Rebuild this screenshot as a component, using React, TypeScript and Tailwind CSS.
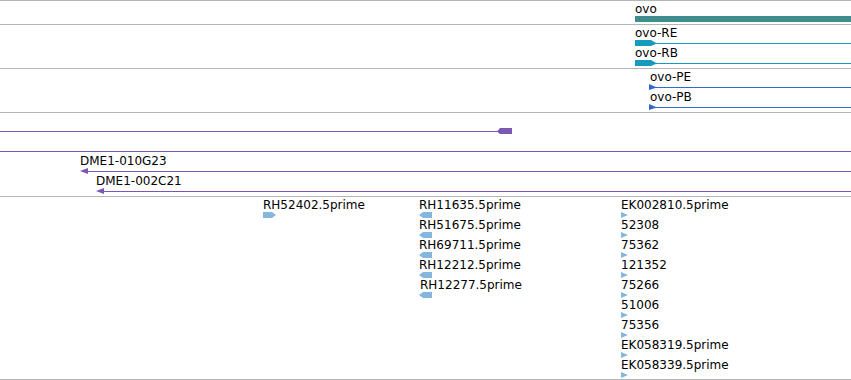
import React from "react";

type Glyph = "rightSmall" | "leftSmall" | "rightBar" | "leftBar" | "tiny" | "boxRight" | "boxLeft";

const shapes: Record<Glyph, { w: number; pts: string }> = {
  rightSmall: { w: 8, pts: "0,0 8,3.5 0,6" },
  leftSmall: { w: 8, pts: "0,3 8,0 8,6" },
  rightBar: { w: 13, pts: "0,0 9,0 13,3 9,6 0,6" },
  leftBar: { w: 13, pts: "0,3 4,0 13,0 13,6 4,6" },
  tiny: { w: 7, pts: "0,0 7,3 0,6" },
  boxRight: { w: 22, pts: "0,0 16,0 22,3.5 16,6 0,6" },
  boxLeft: { w: 15, pts: "0,3.5 3,0 15,0 15,6 3,6" },
};

function Shape({ kind, color }: { kind: Glyph; color: string }) {
  const s = shapes[kind];
  return (
    <svg className="block shrink-0" width={s.w} height={6} viewBox={`0 0 ${s.w} 6`}>
      <polygon points={s.pts} fill={color} />
    </svg>
  );
}

type Feat = {
  x: number; // genomic position on the canvas
  label?: string;
  labelDx?: number;
  glyph?: Glyph;
  color: string;
  line?: [number, number];
};

/* One layout row of a track: 20px tall, label above glyph */
function Row({ feats }: { feats: Feat[] }) {
  return (
    <div className="relative h-[20px] shrink-0">
      {feats.map((f, i) => (
        <React.Fragment key={i}>
          {f.line && (
            <div
              className="absolute top-[18px] h-px"
              style={{ left: f.line[0], width: f.line[1] - f.line[0], background: f.color }}
            />
          )}
          <div className="absolute top-px flex flex-col" style={{ left: f.x }}>
            <span className="h-[14px] whitespace-nowrap" style={{ paddingLeft: f.labelDx ?? 0 }}>
              {f.label ?? ""}
            </span>
            {f.glyph && <Shape kind={f.glyph} color={f.color} />}
          </div>
        </React.Fragment>
      ))}
    </div>
  );
}

function Track({ h, children }: { h: string; children: React.ReactNode }) {
  return <div className={`flex flex-col border-b border-[#b4b4b4] ${h}`}>{children}</div>;
}

const EST_BLUE = "#84b6de";
const PURPLE = "#7b58b4";
const CYAN = "#179bbd";
const BLUE = "#3566cc";
const TEAL = "#3f8e8e";

const col2 = ["RH11635.5prime", "RH51675.5prime", "RH69711.5prime", "RH12212.5prime", "RH12277.5prime"];
const col3 = [
  "EK002810.5prime",
  "52308",
  "75362",
  "121352",
  "75266",
  "51006",
  "75356",
  "EK058319.5prime",
  "EK058339.5prime",
];

export default function App() {
  const estRows: Feat[][] = col3.map((t, i) => {
    const r: Feat[] = [];
    if (i === 0) r.push({ x: 263, label: "RH52402.5prime", glyph: "rightBar", color: EST_BLUE });
    if (i < col2.length)
      r.push({ x: 419, label: col2[i], labelDx: i === 4 ? 1 : 0, glyph: "leftBar", color: EST_BLUE });
    r.push({ x: 621, label: t, glyph: "tiny", color: EST_BLUE });
    return r;
  });

  return (
    <div className="flex flex-col w-[851px] h-[380px] overflow-hidden bg-white border-t border-[#b4b4b4] font-['DejaVu_Sans',sans-serif] text-[12px] leading-[14px] text-black">
      {/* Gene track */}
      <Track h="h-[24px]">
        <div className="flex flex-col pl-[635px] pt-px">
          <span className="h-[14px]">ovo</span>
          <div className="h-[6px] bg-[#3f8e8e]" style={{ background: TEAL }} />
        </div>
      </Track>
      {/* Transcripts */}
      <Track h="h-[44px]">
        <Row feats={[{ x: 635, label: "ovo-RE", glyph: "boxRight", color: CYAN, line: [650, 851] }]} />
        <Row feats={[{ x: 635, label: "ovo-RB", glyph: "boxRight", color: CYAN, line: [650, 851] }]} />
      </Track>
      {/* Proteins */}
      <Track h="h-[44px]">
        <Row feats={[{ x: 649, label: "ovo-PE", labelDx: 1, glyph: "rightSmall", color: BLUE, line: [649, 851] }]} />
        <Row feats={[{ x: 649, label: "ovo-PB", labelDx: 1, glyph: "rightSmall", color: BLUE, line: [649, 851] }]} />
      </Track>
      {/* Clone track */}
      <Track h="h-[84px]">
        <Row feats={[{ x: 497, glyph: "boxLeft", color: PURPLE, line: [0, 499] }]} />
        <Row feats={[{ x: 0, color: PURPLE, line: [0, 851] }]} />
        <Row feats={[{ x: 80, label: "DME1-010G23", glyph: "leftSmall", color: PURPLE, line: [82, 851] }]} />
        <Row feats={[{ x: 96, label: "DME1-002C21", glyph: "leftSmall", color: PURPLE, line: [98, 851] }]} />
      </Track>
      {/* EST track */}
      <Track h="h-[183px]">
        {estRows.map((r, i) => (
          <Row key={i} feats={r} />
        ))}
      </Track>
    </div>
  );
}
